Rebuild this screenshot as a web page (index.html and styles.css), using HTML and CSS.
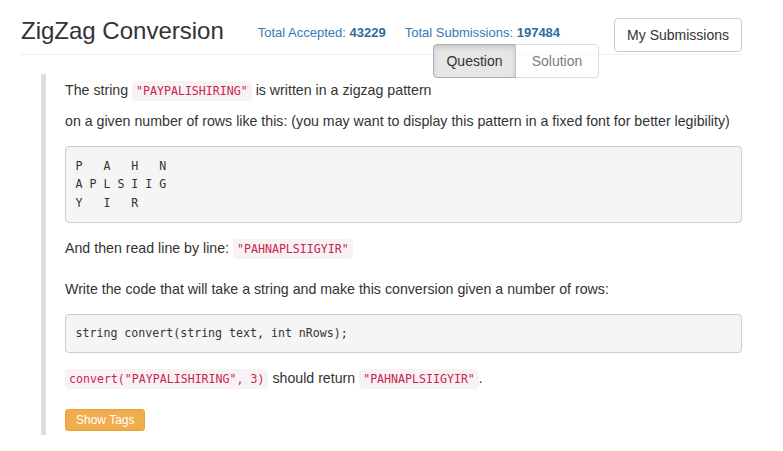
FILE: index.html
```html
<!DOCTYPE html>
<html>
<head>
<meta charset="utf-8">
<title>ZigZag Conversion</title>
<link rel="stylesheet" href="styles.css">
</head>
<body>
<div class="page">
  <div class="header">
    <h3 class="title">ZigZag Conversion</h3>
    <div class="stats">
      <span class="stat">Total Accepted: <b>43229</b></span>
      <span class="stat">Total Submissions: <b>197484</b></span>
    </div>
    <button class="btn btn-default my-subs">My Submissions</button>
  </div>
  <div class="tabs-row">
    <div class="btn-group">
      <button class="btn btn-default active">Question</button>
      <button class="btn btn-default disabled">Solution</button>
    </div>
  </div>
  <div class="question">
    <p>The string <code>"PAYPALISHIRING"</code> is written in a zigzag pattern<br>on a given number of rows like this: (you may want to display this pattern in a fixed font for better legibility)</p>
<pre>P   A   H   N
A P L S I I G
Y   I   R</pre>
    <p>And then read line by line: <code>"PAHNAPLSIIGYIR"</code></p>
    <p>Write the code that will take a string and make this conversion given a number of rows:</p>
<pre>string convert(string text, int nRows);</pre>
    <p><code>convert("PAYPALISHIRING", 3)</code> should return <code>"PAHNAPLSIIGYIR"</code>.</p>
    <div class="tags-row">
      <button class="btn btn-warning btn-xs">Show Tags</button>
    </div>
  </div>
</div>
</body>
</html>
```

FILE: styles.css
```css
* {
  box-sizing: border-box;
}

html, body {
  margin: 0;
  padding: 0;
  background: #fff;
}

body {
  font-family: "Liberation Sans", Arial, sans-serif;
  font-size: 14px;
  line-height: 20px;
  color: #333;
}

.page {
  width: 742px;
  padding-left: 21px;
}

.header {
  display: flex;
  align-items: flex-start;
  padding-top: 18px;
  padding-bottom: 2px;
  border-bottom: 1px solid #eee;
}

.title {
  margin: 0;
  font-size: 24px;
  font-weight: 500;
  line-height: 26.4px;
  color: #333;
}

.stats {
  display: flex;
  margin-top: 5px;
  margin-left: 34px;
  font-size: 13px;
  line-height: 20px;
  color: #337ab7;
}

.stat {
  margin-right: 19px;
}

.stat b {
  color: #2d6d9f;
  font-weight: bold;
}

.btn {
  display: inline-block;
  font-family: "Liberation Sans", Arial, sans-serif;
  font-size: 14px;
  line-height: 20px;
  padding: 6px 12px;
  border: 1px solid #ccc;
  border-radius: 4px;
  background: #fff;
  color: #333;
  cursor: pointer;
  margin: 0;
}

.my-subs {
  margin-left: auto;
}

.tabs-row {
  height: 30px;
  margin-top: -11px;
  padding-left: 412px;
}

.btn-group {
  display: inline-flex;
}

.btn-group .btn {
  border-radius: 0;
  width: 83px;
  text-align: center;
  padding-left: 0;
  padding-right: 0;
}

.btn-group .btn:first-child {
  border-radius: 4px 0 0 4px;
}

.btn-group .btn:last-child {
  border-radius: 0 4px 4px 0;
  margin-left: -1px;
  width: 84px;
}

.btn.active {
  background: #e6e6e6;
  border-color: #adadad;
  box-shadow: inset 0 3px 5px rgba(0, 0, 0, 0.125);
}

.btn.disabled {
  opacity: 0.65;
  cursor: not-allowed;
}

.question {
  margin-left: 20px;
  border-left: 5px solid #ddd;
  padding: 1px 0 4px 19px;
}

.question p {
  margin: 0 0 10px;
  line-height: 30px;
  font-size: 14.2px;
}

code {
  font-family: "DejaVu Sans Mono", "Liberation Mono", monospace;
  font-size: 11.6px;
  padding: 3px 4px;
  color: #c7254e;
  background: #f9f2f4;
  border-radius: 4px;
}

pre {
  margin: 0 0 10px;
  padding: 9.5px;
  font-family: "DejaVu Sans Mono", "Liberation Mono", monospace;
  font-size: 11.6px;
  line-height: 18.57px;
  color: #333;
  background: #f5f5f5;
  border: 1px solid #ccc;
  border-radius: 4px;
  white-space: pre;
}

.tags-row {
  padding-top: 5px;
  display: flex;
}

.btn-xs {
  font-size: 12px;
  line-height: 18px;
  padding: 1px 10px;
  border-radius: 3px;
}

.btn-warning {
  background: #f0ad4e;
  border-color: #eea236;
  color: #fff;
}
```
